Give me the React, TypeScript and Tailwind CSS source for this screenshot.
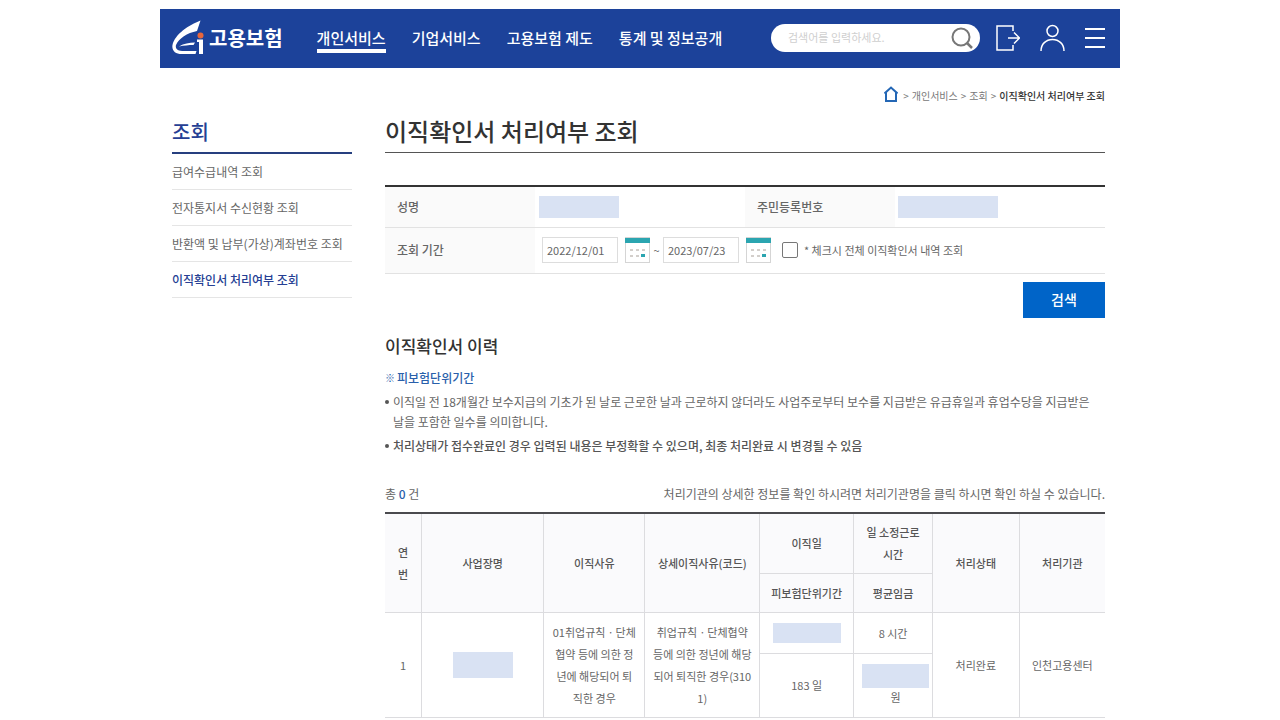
import { useState } from "react"

const navItems = ["개인서비스", "기업서비스", "고용보험 제도", "통계 및 정보공개"]

const sideItems = [
  "급여수급내역 조회",
  "전자통지서 수신현황 조회",
  "반환액 및 납부(가상)계좌번호 조회",
  "이직확인서 처리여부 조회",
]

function Logo() {
  return (
    <a href="#" className="flex items-center gap-1 text-white">
      <svg width="33" height="36" viewBox="0 0 33 36" aria-hidden="true">
        <path
          d="M28.500 0.500C17 5 3 14 0.500 25c-1 5.500 3 9 9 9h14l1-3H12c-6 0-9-2-8-6C7 18.500 15 13 25 11z"
          fill="#fff"
        />
        <path d="M7 26.500C12 23.500 17 22.500 23 22.500l-1.500 2.500c-5 0-9.500 0.500-14.500 1.500z" fill="#fff" />
        <circle cx="28.500" cy="15.500" r="3" fill="#e8663c" />
        <path d="M25 19.500h6V34h-4V22h-2z" fill="#fff" />
      </svg>
      <span className="text-[20px] leading-7 font-bold whitespace-nowrap">고용보험</span>
    </a>
  )
}

function Header() {
  return (
    <header className="flex h-[59px] items-center bg-[#1c429a] pb-0.5 pl-3 pr-[15px]">
      <Logo />
      <nav className="ml-[34px] flex gap-[26px]">
        {navItems.map((item, i) => (
          <a
            key={item}
            href="#"
            className={`border-b-4 pt-1 text-[15px] leading-[22px] font-medium whitespace-nowrap text-white ${
              i === 0 ? "border-white" : "border-transparent"
            }`}
          >
            {item}
          </a>
        ))}
      </nav>
      <form
        className="ml-auto flex h-7 w-[209px] items-center rounded-full bg-white pl-[17px] pr-1.5"
        onSubmit={(e) => e.preventDefault()}
      >
        <input
          type="text"
          aria-label="검색어"
          placeholder="검색어를 입력하세요."
          className="min-w-0 flex-1 text-[11px] text-[#555] outline-none placeholder:text-[#cfcfcf]"
        />
        <button type="submit" aria-label="검색">
          <svg width="24" height="24" viewBox="0 0 24 24" fill="none" stroke="#777" strokeWidth="2">
            <circle cx="11" cy="11" r="8.500" />
            <path d="M17 17l5 5" strokeWidth="2.500" />
          </svg>
        </button>
      </form>
      <div className="ml-4 flex items-center gap-5">
        <button aria-label="로그아웃">
          <svg width="24" height="26" viewBox="0 0 24 26" fill="none" stroke="#fff" strokeWidth="1.500">
            <path d="M17 6V1H1v24h16v-5M12 13h11M18 7.500L23.500 13 18 18.500" />
          </svg>
        </button>
        <button aria-label="마이페이지">
          <svg width="25" height="28" viewBox="0 0 25 28" fill="none" stroke="#fff" strokeWidth="1.500">
            <circle cx="12.500" cy="7" r="5.500" />
            <path d="M1 27c0-7 5-11.500 11.500-11.500S24 20 24 27" />
          </svg>
        </button>
        <button aria-label="전체메뉴">
          <svg width="20" height="20" viewBox="0 0 20 20" fill="none" stroke="#fff" strokeWidth="2">
            <path d="M0 1h20M0 10h20M0 19h20" />
          </svg>
        </button>
      </div>
    </header>
  )
}

function Breadcrumb() {
  return (
    <div className="flex h-[51px] items-center justify-end gap-[3px] pr-[15px] pt-1 text-[10px] text-[#777]">
      <a href="#" aria-label="홈" className="-mt-1 mr-0.5">
        <svg width="14" height="16" viewBox="0 0 14 16" fill="none" stroke="#2467b5" strokeWidth="2">
          <path d="M0.500 7.500L7 1.500l6.500 6M2 6v9h10V6" />
        </svg>
      </a>
      <span>&gt;</span>
      <a href="#">개인서비스</a>
      <span>&gt;</span>
      <a href="#">조회</a>
      <span>&gt;</span>
      <span className="font-medium text-[#333]">이직확인서 처리여부 조회</span>
    </div>
  )
}

function Sidebar() {
  return (
    <aside className="w-[180px] shrink-0">
      <h2 className="border-b-2 border-[#263f7f] pb-[7px] text-[20px] leading-[26px] font-medium text-[#263f94]">
        조회
      </h2>
      <ul>
        {sideItems.map((item, i) => (
          <li key={item} className="border-b border-[#e5e5e5]">
            <a
              href="#"
              className={`block text-[12px] leading-[35px] whitespace-nowrap ${
                i === 3 ? "font-medium text-[#263f94]" : "text-[#666]"
              }`}
            >
              {item}
            </a>
          </li>
        ))}
      </ul>
    </aside>
  )
}

// 달력 버튼
function CalendarButton({ label }: { label: string }) {
  return (
    <button type="button" aria-label={label}>
      <svg width="25" height="26" viewBox="0 0 25 26">
        <rect x="0.500" y="0.500" width="24" height="25" fill="#fff" stroke="#d5d5d5" />
        <rect y="1" width="25" height="5" fill="#2ba5b0" />
        <g fill="#d3cfcb">
          <rect x="5" y="12" width="3" height="2" />
          <rect x="11" y="12" width="3" height="2" />
          <rect x="17" y="12" width="3" height="2" />
          <rect x="5" y="18" width="3" height="2" />
          <rect x="11" y="18" width="3" height="2" />
        </g>
        <rect x="16" y="17" width="4" height="3" fill="#2ba5b0" />
      </svg>
    </button>
  )
}

function SearchForm() {
  const [from, setFrom] = useState("2022/12/01")
  const [to, setTo] = useState("2023/07/23")
  const dateInput = "h-[26px] w-[76px] border border-[#ddd] pl-1 text-[11px] text-[#666] outline-none"
  const th = "bg-[#fafafa] px-3 text-left text-[12px] font-medium text-[#666]"

  return (
    <form onSubmit={(e) => e.preventDefault()}>
      <table className="mt-8 w-full table-fixed border-collapse border-t-2 border-[#333]">
        <colgroup>
          <col className="w-[150px]" />
          <col />
          <col className="w-[150px]" />
          <col />
        </colgroup>
        <tbody>
          <tr className="h-[41px] border-b border-[#e2e2e2]">
            <th scope="row" className={th}>성명</th>
            <td className="px-1">
              <div className="h-[22px] w-20 bg-[#d9e2f3]" />
            </td>
            <th scope="row" className={th}>주민등록번호</th>
            <td className="px-[3px]">
              <div className="h-[22px] w-[100px] bg-[#d9e2f3]" />
            </td>
          </tr>
          <tr className="h-[46px] border-b border-[#e2e2e2]">
            <th scope="row" className={th}>조회 기간</th>
            <td colSpan={3} className="pl-[7px]">
              <div className="flex items-center text-[11px] text-[#666]">
                <input aria-label="시작일" className={dateInput} value={from} onChange={(e) => setFrom(e.target.value)} />
                <span className="ml-[7px] flex"><CalendarButton label="시작일 선택" /></span>
                <span className="w-[13px] text-center">~</span>
                <input aria-label="종료일" className={dateInput} value={to} onChange={(e) => setTo(e.target.value)} />
                <span className="ml-[7px] flex"><CalendarButton label="종료일 선택" /></span>
                <label className="ml-[11px] flex items-center gap-1.5">
                  <input
                    type="checkbox"
                    className="size-4 appearance-none rounded-xs border border-[#777] bg-white checked:bg-[#0064c8]"
                  />
                  * 체크시 전체 이직확인서 내역 조회
                </label>
              </div>
            </td>
          </tr>
        </tbody>
      </table>
      <div className="mt-2 flex justify-end">
        <button type="submit" className="h-9 w-[82px] bg-[#0064c8] text-[14px] font-medium text-white">
          검색
        </button>
      </div>
    </form>
  )
}

function ResultTable() {
  const th = "border-b border-l border-[#dcdcdf] px-[7px] font-medium"
  const td = "border-b border-l border-[#dcdcdf] px-[7px]"

  return (
    <table className="w-full table-fixed border-separate border-spacing-0 border-t-2 border-[#4a4a4e] text-center text-[11px] leading-[22px] text-[#666]">
      <colgroup>
        <col className="w-[5%]" />
        <col className="w-[17%]" />
        <col className="w-[14%]" />
        <col className="w-[16%]" />
        <col className="w-[13%]" />
        <col className="w-[11%]" />
        <col className="w-[12%]" />
        <col className="w-[12%]" />
      </colgroup>
      <thead className="bg-[#fafafc] text-[#555]">
        <tr className="h-[60px]">
          <th rowSpan={2} className="border-b border-[#dcdcdf] px-3 font-medium break-all">연번</th>
          <th rowSpan={2} className={th}>사업장명</th>
          <th rowSpan={2} className={th}>이직사유</th>
          <th rowSpan={2} className={th}>상세이직사유(코드)</th>
          <th className={th}>이직일</th>
          <th className={th}>일 소정근로<br />시간</th>
          <th rowSpan={2} className={th}>처리상태</th>
          <th rowSpan={2} className={th}>처리기관</th>
        </tr>
        <tr className="h-[39px]">
          <th className={th}>피보험단위기간</th>
          <th className={th}>평균임금</th>
        </tr>
      </thead>
      <tbody>
        <tr className="h-[41px]">
          <td rowSpan={2} className="border-b border-[#dcdcdf] px-[7px]">1</td>
          <td rowSpan={2} className={td}>
            <div className="mx-auto h-[26px] w-[60px] bg-[#d9e2f3]" />
          </td>
          <td rowSpan={2} className="border-b border-l border-[#dcdcdf] px-2 break-all">
            01취업규칙ㆍ단체협약 등에 의한 정년에 해당되어 퇴직한 경우
          </td>
          <td rowSpan={2} className={`${td} break-all`}>
            취업규칙ㆍ단체협약 등에 의한 정년에 해당되어 퇴직한 경우(3101)
          </td>
          <td className={td}>
            <div className="mx-auto h-5 w-[68px] bg-[#d9e2f3]" />
          </td>
          <td className={td}>8 시간</td>
          <td rowSpan={2} className={td}>처리완료</td>
          <td rowSpan={2} className={td}>인천고용센터</td>
        </tr>
        <tr className="h-[64px]">
          <td className={td}>183 일</td>
          <td className="border-b border-l border-[#dcdcdf] pr-[3px] pl-2 leading-[18px]">
            <div className="h-6 w-[67px] bg-[#d9e2f3]" />
            원
          </td>
        </tr>
      </tbody>
    </table>
  )
}

export default function App() {
  return (
    <div className="min-h-screen bg-white pt-[9px] font-['Noto_Sans_CJK_KR',sans-serif] text-[#666]">
      <div className="mx-auto max-w-[960px]">
        <Header />
        <Breadcrumb />
        <div className="flex gap-[33px] pl-3 pr-[15px]">
          <Sidebar />
          <main className="min-w-0 flex-1">
            <h1 className="border-b border-[#555] pb-[9px] text-[24px] leading-6 font-medium text-[#333]">
              이직확인서 처리여부 조회
            </h1>
            <SearchForm />

            <h2 className="mt-4 text-[17px] leading-6 font-medium text-[#333]">이직확인서 이력</h2>
            <p className="mt-2.5 flex gap-0.5 text-[12px] leading-5 font-medium text-[#2960ab]">
              <span className="text-[10px]">※</span>
              <span>피보험단위기간</span>
            </p>
            <ul className="mt-1 space-y-1 text-[12px] leading-5 break-keep">
              <li className="flex gap-1">
                <span className="mt-2 size-1 shrink-0 rounded-full bg-[#555]" />
                <span>
                  이직일 전 18개월간 보수지급의 기초가 된 날로 근로한 날과 근로하지 않더라도 사업주로부터 보수를
                  지급받은 유급휴일과 휴업수당을 지급받은 날을 포함한 일수를 의미합니다.
                </span>
              </li>
              <li className="flex gap-1 font-medium text-[#555]">
                <span className="mt-2 size-1 shrink-0 rounded-full bg-[#555]" />
                <span>
                  처리상태가 접수완료인 경우 입력된 내용은 부정확할 수 있으며, 최종 처리완료 시 변경될 수 있음
                </span>
              </li>
            </ul>

            <div className="mt-7 mb-2 flex justify-between text-[12px] leading-5">
              <p>총 <span className="font-medium text-[#2960ab]">0</span> 건</p>
              <p>처리기관의 상세한 정보를 확인 하시려면 처리기관명을 클릭 하시면 확인 하실 수 있습니다.</p>
            </div>
            <ResultTable />
          </main>
        </div>
      </div>
    </div>
  )
}
